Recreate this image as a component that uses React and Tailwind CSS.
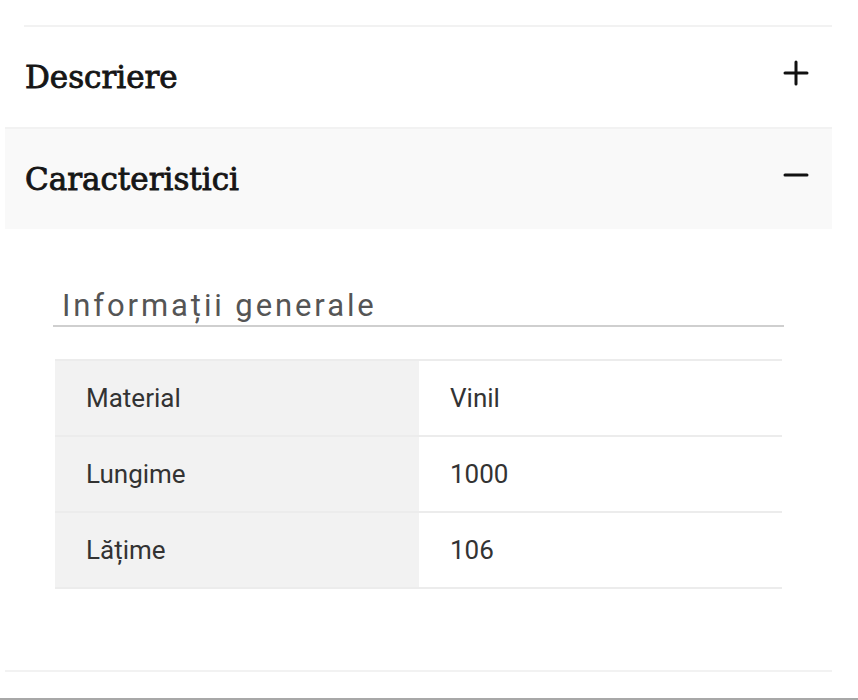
export default function App() {
  const rows = [
    ["Material", "Vinil"],
    ["Lungime", "1000"],
    ["Lățime", "106"],
  ];
  const slab = "font-['DejaVu_Serif',serif] text-[31px] leading-[36px] text-[#161616] [-webkit-text-stroke:0.9px_#161616]";
  return (
    <div className="w-[858px] h-[700px] bg-white relative overflow-hidden font-['Roboto',sans-serif]">
      <div className="h-[25px]" />
      <div className="ml-[24px] w-[808px] h-[2px] bg-[#f2f2f2]" />
      <div className="ml-[5px] w-[827px] h-[100px] flex items-center justify-between pl-[20px] pr-[23px]">
        <span className={slab}>Descriere</span>
        <svg className="mb-[8px]" width="26" height="26" viewBox="0 0 26 26" fill="none" stroke="#111" strokeWidth="3" strokeLinecap="round">
          <path d="M13 2v22M2 13h22" />
        </svg>
      </div>
      <div className="ml-[5px] w-[827px] h-[2px] bg-[#f2f2f2]" />
      <div className="ml-[5px] w-[827px] h-[100px] bg-[#f9f9f9] flex items-center justify-between pl-[20px] pr-[23px]">
        <span className={slab}>Caracteristici</span>
        <svg className="mb-[8px]" width="26" height="26" viewBox="0 0 26 26" fill="none" stroke="#111" strokeWidth="3" strokeLinecap="round">
          <path d="M2 13h22" />
        </svg>
      </div>
      <div className="pl-[53px] w-[784px] pt-[58px]">
        <div className="border-b-2 border-[#cfcfcf] pl-[9px]">
          <span className="text-[31px] leading-[38px] tracking-[2.9px] text-[#555]">Informații generale</span>
        </div>
        <div className="mt-[32px] ml-[2px] w-[727px] border-t-2 border-[#ececec]">
          {rows.map(([k, v]) => (
            <div key={k} className="flex h-[76px] border-b-2 border-[#ececec]">
              <div className="w-[364px] bg-[#f2f2f2] pl-[31px] flex items-center text-[26px] text-[#333]">{k}</div>
              <div className="flex-1 pl-[31px] flex items-center text-[26px] text-[#333]">{v}</div>
            </div>
          ))}
        </div>
      </div>
      <div className="absolute left-[5px] top-[670px] w-[827px] h-[2px] bg-[#f2f2f2]" />
      <div className="absolute left-0 top-[698px] w-[858px] h-[2px] bg-[#a8a8a8]" />
    </div>
  );
}
